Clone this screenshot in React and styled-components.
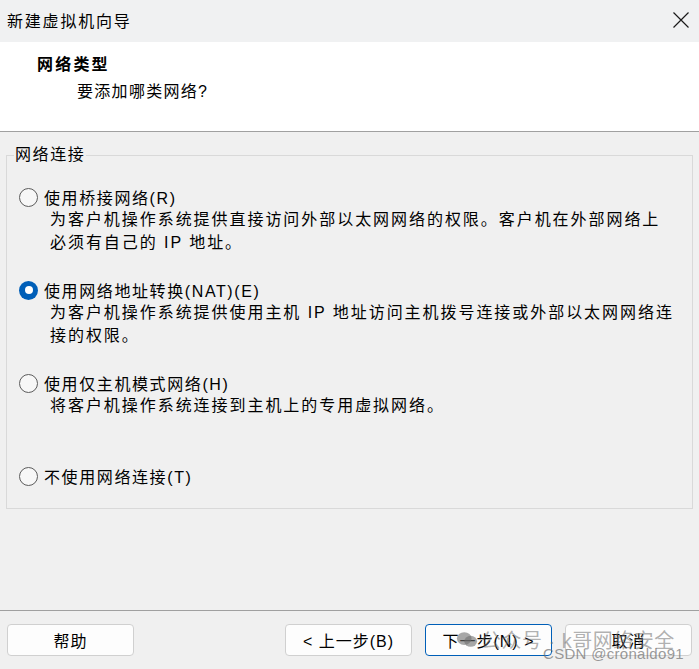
import React from 'react';
import styled, { createGlobalStyle } from 'styled-components';

const GlobalStyle = createGlobalStyle`
  html, body { margin: 0; padding: 0; background: #f0f0f0; }
  body {
    font-family: "Liberation Sans", "Noto Sans CJK SC", sans-serif;
    font-size: 16px;
    color: #000;
  }
`;

const Window = styled.div`
  position: relative;
  width: 699px;
  height: 669px;
  display: flex;
  flex-direction: column;
  background: #f0f0f0;
  overflow: hidden;
`;

const TitleBar = styled.div`
  height: 42px;
  flex: none;
  display: flex;
  align-items: center;
  justify-content: space-between;
  padding: 0 10px 0 7px;
  background: #f0f1f2;
  box-sizing: border-box;
`;

const TitleText = styled.span`
  font-size: 16px;
  letter-spacing: 1.8px;
  margin-top: -2px;
`;

const CloseButton = styled.span`
  display: flex;
  width: 16px;
  height: 16px;
  margin-top: -3px;
`;

const Header = styled.div`
  height: 90px;
  flex: none;
  background: #fff;
  border-bottom: 1px solid #a0a0a0;
  box-sizing: border-box;
  padding: 13px 0 0 37px;
`;

const HeaderTitle = styled.div`
  font-weight: bold;
  font-size: 16px;
  letter-spacing: 2.2px;
  line-height: 20px;
`;

const HeaderSub = styled.div`
  margin: 7px 0 0 40px;
  letter-spacing: 1.3px;
  line-height: 20px;
`;

const Body = styled.div`
  flex: 1;
  padding: 13px 6px 0 6px;
`;

const Group = styled.fieldset`
  margin: 0;
  box-sizing: border-box;
  height: 364px;
  border: 1px solid #d9d9d9;
  padding: 20px 0 0 7px;
  min-inline-size: 0;
`;

const Legend = styled.legend`
  padding: 0 1px;
  line-height: 20px;
  letter-spacing: 1.6px;
`;

const OptionList = styled.div`
  display: flex;
  flex-direction: column;
  gap: 24px;
`;

const Option = styled.div`
  display: flex;
  flex-direction: column;
  min-height: 69px;
`;

const OptionLabel = styled.label`
  display: flex;
  align-items: center;
  height: 24px;
  padding-left: 5px;
  letter-spacing: 1.6px;
  gap: 6px;
`;

const Radio = styled.span`
  width: 19px;
  height: 19px;
  box-sizing: border-box;
  border-radius: 50%;
  flex: none;
  border: ${({ checked }) => (checked ? 'none' : '1px solid #5c5c5c')};
  background: ${({ checked }) => (checked ? '#005fb8' : '#f7f7f7')};
  display: flex;
  align-items: center;
  justify-content: center;
  &::after {
    content: '';
    display: ${({ checked }) => (checked ? 'block' : 'none')};
    width: 8px;
    height: 8px;
    border-radius: 50%;
    background: #fff;
  }
`;

const Desc = styled.div`
  padding-left: 36px;
  line-height: 22.5px;
  letter-spacing: 1.95px;
  white-space: nowrap;
`;

const Footer = styled.div`
  height: 59px;
  flex: none;
  border-top: 1px solid #a0a0a0;
  box-sizing: border-box;
  display: flex;
  align-items: flex-start;
  padding: 13px 7px 0 7px;
`;

const NavGroup = styled.div`
  margin-left: auto;
  display: flex;
  gap: 13px;
`;

const Button = styled.button`
  width: 127px;
  height: 32px;
  box-sizing: border-box;
  border-radius: 4px;
  border: 1px solid ${({ primary }) => (primary ? '#005fb8' : '#d0d0d0')};
  background: #fdfdfd;
  font-family: inherit;
  font-size: 16px;
  color: #000;
  letter-spacing: 1px;
  padding: 0;
`;

const Watermark = styled.div`
  position: absolute;
  left: 456px;
  top: 625px;
  display: flex;
  align-items: center;
  gap: 3px;
  font-size: 20px;
  color: rgba(110, 110, 110, 0.55);
  letter-spacing: 0.5px;
  pointer-events: none;
  white-space: nowrap;
`;

const WatermarkSub = styled.div`
  position: absolute;
  left: 543px;
  top: 645px;
  font-size: 15px;
  color: rgba(110, 110, 110, 0.7);
  letter-spacing: 0.3px;
  pointer-events: none;
  white-space: nowrap;
`;

const options = [
  {
    label: '使用桥接网络(R)',
    lines: ['为客户机操作系统提供直接访问外部以太网网络的权限。客户机在外部网络上', '必须有自己的 IP 地址。'],
  },
  {
    label: '使用网络地址转换(NAT)(E)',
    checked: true,
    lines: ['为客户机操作系统提供使用主机 IP 地址访问主机拨号连接或外部以太网网络连', '接的权限。'],
  },
  {
    label: '使用仅主机模式网络(H)',
    lines: ['将客户机操作系统连接到主机上的专用虚拟网络。'],
  },
  { label: '不使用网络连接(T)', lines: [] },
];

export default function App() {
  return (
    <Window>
      <GlobalStyle />
      <TitleBar>
        <TitleText>新建虚拟机向导</TitleText>
        <CloseButton>
          <svg width="16" height="16" viewBox="0 0 16 16">
            <path d="M0.5 0.5 L15.5 15.5 M15.5 0.5 L0.5 15.5" stroke="#1a1a1a" strokeWidth="1.2" fill="none" />
          </svg>
        </CloseButton>
      </TitleBar>
      <Header>
        <HeaderTitle>网络类型</HeaderTitle>
        <HeaderSub>要添加哪类网络?</HeaderSub>
      </Header>
      <Body>
        <Group>
          <Legend>网络连接</Legend>
          <OptionList>
            {options.map((o) => (
              <Option key={o.label}>
                <OptionLabel>
                  <Radio checked={o.checked} />
                  {o.label}
                </OptionLabel>
                {o.lines.map((l) => (
                  <Desc key={l}>{l}</Desc>
                ))}
              </Option>
            ))}
          </OptionList>
        </Group>
      </Body>
      <Footer>
        <Button>帮助</Button>
        <NavGroup>
          <Button>&lt; 上一步(B)</Button>
          <Button primary>下一步(N) &gt;</Button>
          <Button>取消</Button>
        </NavGroup>
      </Footer>
      <Watermark>
        <svg width="22" height="17" viewBox="0 0 24 18">
          <ellipse cx="9" cy="8" rx="8" ry="7" fill="rgba(110,110,110,0.6)" />
          <ellipse cx="16" cy="11" rx="7" ry="6" fill="rgba(110,110,110,0.6)" />
        </svg>
        <span>公众号 · k哥网络安全</span>
      </Watermark>
      <WatermarkSub>CSDN @cronaldo91</WatermarkSub>
    </Window>
  );
}
